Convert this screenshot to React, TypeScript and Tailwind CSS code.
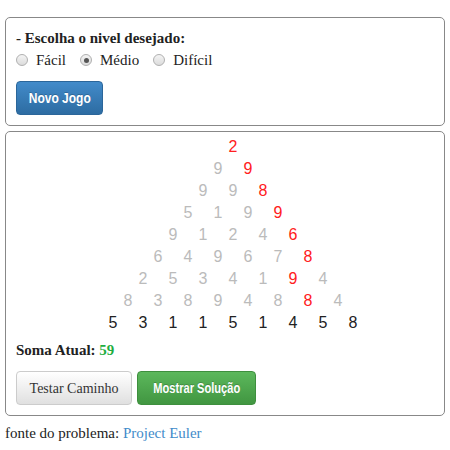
const rows: number[][] = [
  [2],
  [9, 9],
  [9, 9, 8],
  [5, 1, 9, 9],
  [9, 1, 2, 4, 6],
  [6, 4, 9, 6, 7, 8],
  [2, 5, 3, 4, 1, 9, 4],
  [8, 3, 8, 9, 4, 8, 8, 4],
  [5, 3, 1, 1, 5, 1, 4, 5, 8],
]
// index of the chosen number in each row (path)
const path = [0, 1, 2, 3, 4, 5, 5, 6]

function Radio({ label, checked }: { label: string; checked?: boolean }) {
  return (
    <label className="flex items-center mr-[14px]">
      <span className="w-[12px] h-[12px] rounded-full border border-[#b0b0b0] bg-gradient-to-b from-[#f4f4f4] to-[#dcdcdc] flex items-center justify-center mr-[8px]">
        {checked && <span className="w-[5px] h-[5px] rounded-full bg-[#555]" />}
      </span>
      {label}
    </label>
  )
}

export default function App() {
  return (
    <div className="bg-white w-[450px] h-[450px] text-[#222] font-['Liberation_Serif',serif] text-[15px]">
      <div className="h-[17px]" />
      <div className="mx-[5px] w-[440px] border border-[#888] rounded-[5px] px-[10px] pt-[10px] pb-[10px]">
        <div className="font-bold leading-[20px]">- Escolha o nivel desejado:</div>
        <div className="flex leading-[24px]">
          <Radio label="Fácil" />
          <Radio label="Médio" checked />
          <Radio label="Difícil" />
        </div>
        <button className="mt-[9px] h-[34px] w-[87px] rounded-[4px] border border-[#2b669a] bg-gradient-to-b from-[#428bca] to-[#2d6ca2] text-white font-bold font-['Liberation_Sans',sans-serif] text-[15px] [text-shadow:0_-1px_0_rgba(0,0,0,0.2)] flex items-center justify-center">
          <span className="inline-block scale-x-[0.8] whitespace-nowrap">Novo Jogo</span>
        </button>
      </div>
      <div className="mt-[5px] mx-[5px] w-[440px] border border-[#888] rounded-[5px] px-[10px] pt-[4px] pb-[10px]">
        <div className="pl-[16px] font-['Liberation_Sans',sans-serif] text-[16px]">
          {rows.map((row, r) => (
            <div key={r} className="flex justify-center h-[22px] leading-[22px]">
              {row.map((n, i) => {
                const last = r === rows.length - 1
                const color = last
                  ? 'text-[#222]'
                  : path[r] === i
                    ? 'text-[#ff2020]'
                    : 'text-[#bbb]'
                return (
                  <span key={i} className={`w-[30px] text-center ${color}`}>
                    {n}
                  </span>
                )
              })}
            </div>
          ))}
        </div>
        <div className="mt-[6px] font-bold leading-[20px]">
          Soma Atual: <span className="text-[#1fae3f]">59</span>
        </div>
        <div className="flex gap-[5px] mt-[11px]">
          <button className="h-[34px] w-[116px] rounded-[4px] border border-[#ccc] bg-gradient-to-b from-[#ffffff] to-[#e0e0e0] text-[#333] text-[14px]">
            Testar Caminho
          </button>
          <button className="h-[34px] w-[119px] rounded-[4px] border border-[#3e8f3e] bg-gradient-to-b from-[#5cb85c] to-[#419641] text-white font-bold font-['Liberation_Sans',sans-serif] text-[15px] [text-shadow:0_-1px_0_rgba(0,0,0,0.2)] flex items-center justify-center">
            <span className="inline-block scale-x-[0.74] whitespace-nowrap">Mostrar Solução</span>
          </button>
        </div>
      </div>
      <div className="mt-[7px] ml-[5px] leading-[20px]">
        fonte do problema: <a className="text-[#428bca]">Project Euler</a>
      </div>
    </div>
  )
}
